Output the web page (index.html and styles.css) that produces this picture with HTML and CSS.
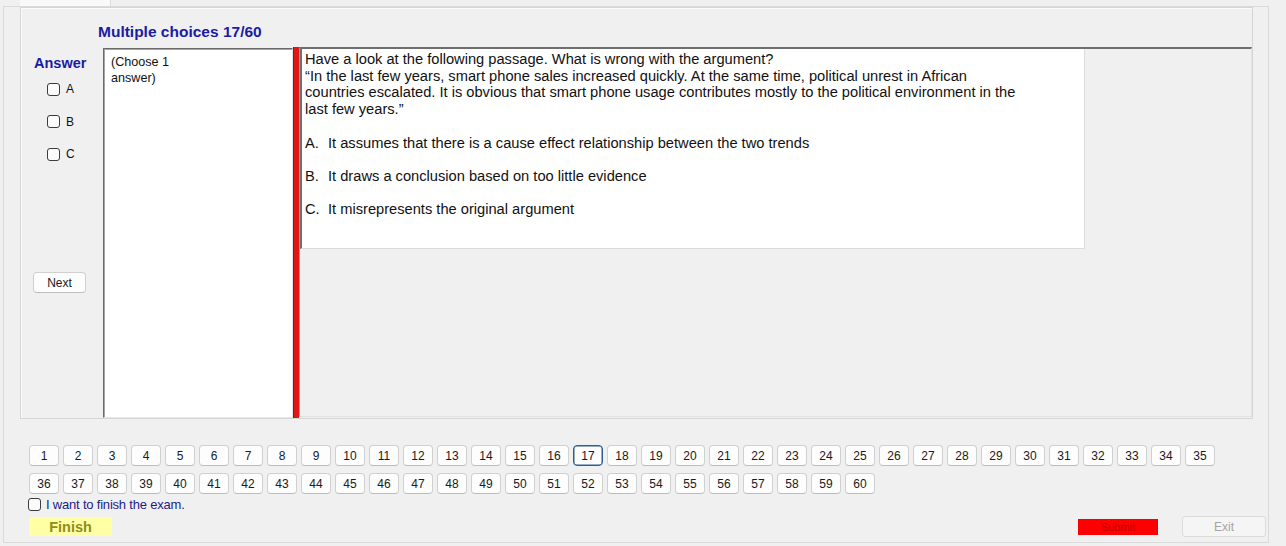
FILE: index.html
```html
<!DOCTYPE html>
<html>
<head>
<meta charset="utf-8">
<link rel="stylesheet" href="styles.css">
</head>
<body>
<div class="tabstrip"><div class="tab"></div></div>
<div class="tabpage">
  <div class="group">
    <div class="title">Multiple choices 17/60</div>
    <div class="content">
      <div class="answer-col">
        <div class="answer-label">Answer</div>
        <div class="opt-list">
          <label class="opt"><span class="cb"></span><span>A</span></label>
          <label class="opt"><span class="cb"></span><span>B</span></label>
          <label class="opt"><span class="cb"></span><span>C</span></label>
        </div>
        <button class="btn next">Next</button>
      </div>
      <div class="choose-box">(Choose 1<br>answer)</div>
      <div class="redbar"></div>
      <div class="qpanel">
        <div class="qbox">
          <div class="qtext">Have a look at the following passage. What is wrong with the argument?<br>“In the last few years, smart phone sales increased quickly. At the same time, political unrest in African<br>countries escalated. It is obvious that smart phone usage contributes mostly to the political environment in the<br>last few years.”</div>
          <div class="choice"><span class="letter">A.</span>It assumes that there is a cause effect relationship between the two trends</div>
          <div class="choice"><span class="letter">B.</span>It draws a conclusion based on too little evidence</div>
          <div class="choice"><span class="letter">C.</span>It misrepresents the original argument</div>
        </div>
      </div>
    </div>
  </div>
  <div class="nav">
    <button class="nb">1</button><button class="nb">2</button><button class="nb">3</button><button class="nb">4</button><button class="nb">5</button><button class="nb">6</button><button class="nb">7</button><button class="nb">8</button><button class="nb">9</button><button class="nb">10</button><button class="nb">11</button><button class="nb">12</button><button class="nb">13</button><button class="nb">14</button><button class="nb">15</button><button class="nb">16</button><button class="nb current">17</button><button class="nb">18</button><button class="nb">19</button><button class="nb">20</button><button class="nb">21</button><button class="nb">22</button><button class="nb">23</button><button class="nb">24</button><button class="nb">25</button><button class="nb">26</button><button class="nb">27</button><button class="nb">28</button><button class="nb">29</button><button class="nb">30</button><button class="nb">31</button><button class="nb">32</button><button class="nb">33</button><button class="nb">34</button><button class="nb">35</button>
    <button class="nb">36</button><button class="nb">37</button><button class="nb">38</button><button class="nb">39</button><button class="nb">40</button><button class="nb">41</button><button class="nb">42</button><button class="nb">43</button><button class="nb">44</button><button class="nb">45</button><button class="nb">46</button><button class="nb">47</button><button class="nb">48</button><button class="nb">49</button><button class="nb">50</button><button class="nb">51</button><button class="nb">52</button><button class="nb">53</button><button class="nb">54</button><button class="nb">55</button><button class="nb">56</button><button class="nb">57</button><button class="nb">58</button><button class="nb">59</button><button class="nb">60</button>
  </div>
  <label class="finish-check"><span class="cb"></span><span>I want to finish the exam.</span></label>
  <div class="bottom">
    <button class="finish">Finish</button>
    <div class="spacer"></div>
    <button class="submit">Submit</button>
    <button class="exit">Exit</button>
  </div>
</div>
</body>
</html>
```
FILE: styles.css
```css
* { box-sizing: border-box; margin: 0; padding: 0; }
html, body { width: 1286px; height: 546px; overflow: hidden; }
body {
  background: #f0f0f0;
  font-family: "Liberation Sans", Arial, sans-serif;
  color: #000;
}
button { font-family: "Liberation Sans", Arial, sans-serif; cursor: default; }

.tabstrip { height: 6px; padding-left: 20px; display: flex; }
.tab { width: 91px; height: 6px; background: #f9f9f9; border-right: 1px solid #dcdcdc; }

.tabpage {
  margin-left: 3px;
  width: 1266px;
  height: 537px;
  border: 1px solid #dadada;
  padding-left: 16px;
  display: flex;
  flex-direction: column;
}

.group {
  width: 1233px;
  border: 1px solid #d6d6d6;
  box-shadow: inset 1px 1px 0 #fbfbfb;
  padding-top: 16px;
}
.title {
  margin-left: 77px;
  font-size: 15.5px;
  line-height: 16px;
  font-weight: bold;
  color: #1b1ba3;
}
.content {
  margin-top: 7px;
  height: 371px;
  display: flex;
}

.answer-col {
  width: 82px;
  padding-left: 13px;
  display: flex;
  flex-direction: column;
  align-items: flex-start;
}
.answer-label {
  margin-top: 8px;
  font-size: 14.5px;
  line-height: 16px;
  font-weight: bold;
  color: #1b1ba3;
}
.opt-list { margin-top: 10px; display: flex; flex-direction: column; gap: 16.5px; }
.opt {
  height: 16px;
  display: flex;
  align-items: center;
  gap: 6px;
  margin-left: 13px;
  font-size: 12px;
  color: #111;
}
.cb {
  width: 13px;
  height: 13px;
  border: 1px solid #3c3c3c;
  border-radius: 3px;
  background: #fbfbfb;
  flex: none;
}
.btn {
  background: #fdfdfd;
  border: 1px solid #d0d0d0;
  border-bottom-color: #bdbdbd;
  border-radius: 4px;
  font-size: 12px;
  color: #1a1a1a;
}
.next {
  margin-top: 110px;
  margin-left: -1px;
  width: 53px;
  height: 21px;
}

.choose-box {
  margin-top: 1px;
  width: 190px;
  height: 370px;
  background: #fff;
  border-top: 1px solid #6a6a6a;
  border-left: 1px solid #6a6a6a;
  border-right: 1px solid #e6e6e6;
  border-bottom: 1px solid #e6e6e6;
  box-shadow: inset 1px 1px 0 #a5a5a5;
  padding: 5px 0 0 7px;
  font-size: 12.6px;
  line-height: 16px;
  color: #111;
}
.redbar {
  width: 6px;
  height: 371px;
  background: #e01717;
  border-left: 1px solid #9a1010;
}
.qpanel {
  flex: 1;
  height: 370px;
  border-top: 2px solid #6e6e6e;
  border-left: 1px solid #9c9c9c;
  border-right: 1px solid #e2e2e2;
  border-bottom: 1px solid #e2e2e2;
}
.qbox {
  width: 785px;
  height: 200px;
  background: #fff;
  border-left: 2px solid #707070;
  border-right: 1px solid #dcdcdc;
  border-bottom: 1px solid #dcdcdc;
  padding: 2px 0 0 3px;
  font-size: 14.67px;
  color: #111;
}
.qtext { line-height: 16.5px; white-space: nowrap; }
.choice { line-height: 17px; margin-top: 16px; white-space: nowrap; }
.qtext + .choice { margin-top: 17.5px; }
.letter { display: inline-block; width: 23px; }

.nav {
  margin-top: 26px;
  margin-left: 9px;
  display: grid;
  grid-template-columns: repeat(35, 30px);
  grid-auto-rows: 21px;
  column-gap: 4px;
  row-gap: 7px;
}
.nb {
  background: #fdfdfd;
  border: 1px solid #d0d0d0;
  border-bottom-color: #bcbcbc;
  border-radius: 4px;
  font-size: 12px;
  color: #1a1a1a;
}
.nb.current { border: 1px solid #2b5f90; box-shadow: inset 0 0 0 0.5px #2b5f90; }

.finish-check {
  margin-top: 3px;
  margin-left: 8px;
  height: 14px;
  display: flex;
  align-items: center;
  gap: 5px;
  font-size: 13px;
  color: #1c1c8c;
  letter-spacing: -0.2px;
}
.bottom {
  margin-top: 5px;
  padding-left: 9px;
  padding-right: 2px;
  display: flex;
  align-items: center;
}
.finish {
  width: 83px;
  height: 19px;
  background: #ffffa6;
  border: none;
  font-size: 14.5px;
  font-weight: bold;
  color: #8e8e16;
}
.spacer { flex: 1; }
.submit {
  width: 80px;
  height: 16px;
  background: #ff0000;
  border: none;
  font-size: 11px;
  color: #b80000;
}
.exit {
  margin-left: 24px;
  width: 84px;
  height: 21px;
  background: #f5f5f5;
  border: 1px solid #dcdcdc;
  border-radius: 3px;
  font-size: 12px;
  color: #a5a5a5;
}
```
